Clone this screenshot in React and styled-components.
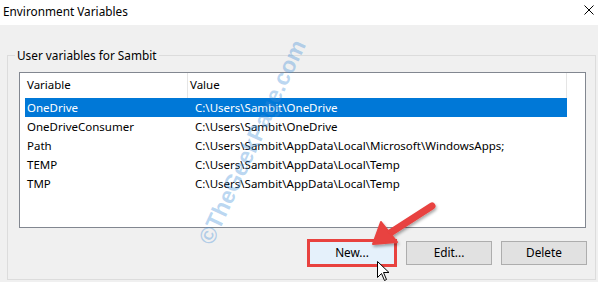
import * as React from "react";
import styled, {createGlobalStyle} from "styled-components";

const GlobalStyle = createGlobalStyle`
  html, body {
    margin: 0;
    padding: 0;
    background: #f0f0f0;
  }
  body {
    font-family: "Noto Sans", "Open Sans", sans-serif;
    font-size: 11.5px;
    color: #000;
  }
`;

const Window = styled.div`
  position: relative;
  width: 598px;
  height: 282px;
  overflow: hidden;
  display: flex;
  flex-direction: column;
  background: #f0f0f0;
`;

const TitleBar = styled.div`
  height: 25px;
  background: #fff;
  display: flex;
  align-items: center;
  justify-content: space-between;
  padding: 0 3px 4px 3px;
  box-sizing: border-box;
  flex-shrink: 0;
`;

const Title = styled.span`
  font-size: 11.8px;
  line-height: 16px;
`;

const CloseIcon = styled.svg`
  width: 10px;
  height: 10px;
  margin-right: 1px;
  margin-top: -2px;
`;

const GroupBox = styled.div`
  position: relative;
  margin: 30px 2px 2px 7px;
  border: 1px solid #dcdcdc;
  padding: 16px 9px 12px 11px;
  display: flex;
  flex-direction: column;
  gap: 13px;
  flex: 1;
`;

const Legend = styled.span`
  position: absolute;
  top: -9px;
  left: 7px;
  padding: 0 2px;
  background: #f0f0f0;
  line-height: 16px;
  font-size: 11.8px;
`;

const ListView = styled.div`
  height: 154px;
  background: #fff;
  border: 1px solid #828790;
  display: flex;
  flex-direction: column;
  position: relative;
`;

const HeaderRow = styled.div`
  display: flex;
  height: 25px;
  align-items: stretch;
  padding-left: 5px;
  width: 542px;
`;

const HeaderCell = styled.div`
  width: ${p => p.$w}px;
  flex-shrink: 0;
  padding-left: 2px;
  box-sizing: border-box;
  display: flex;
  align-items: center;
  border-right: ${p => (p.$sep ? "1px solid #e5e5e5" : "none")};
  flex-grow: ${p => (p.$grow ? 1 : 0)};
  padding-bottom: 2px;
`;

const Row = styled.div`
  display: flex;
  height: 19px;
  align-items: center;
  margin-left: 5px;
  width: 542px;
  background: ${p => (p.$selected ? "#0078d7" : "transparent")};
  color: ${p => (p.$selected ? "#fff" : "#000")};
`;

const Cell = styled.div`
  width: ${p => p.$w}px;
  flex-shrink: 0;
  padding-left: 2px;
  box-sizing: border-box;
  white-space: nowrap;
`;

const ButtonRow = styled.div`
  display: flex;
  justify-content: flex-end;
  gap: 9px;
  margin-right: -1px;
`;

const Button = styled.button`
  width: 86px;
  height: 24px;
  font-family: "Noto Sans", "Open Sans", sans-serif;
  font-size: 11.8px;
  color: #000;
  background: ${p => (p.$active ? "#e5f1fb" : "#e1e1e1")};
  border: 1px solid ${p => (p.$active ? "#0078d7" : "#adadad")};
  outline: ${p => (p.$marked ? "3px solid #e8423f" : "none")};
  outline-offset: -1px;
  padding: 0 0 2px 0;
  margin-right: ${p => (p.$marked ? "2px" : "0")};
`;

const Watermark = styled.div`
  position: absolute;
  left: 134px;
  top: 128px;
  width: 236px;
  text-align: center;
  font-family: "Liberation Sans", sans-serif;
  font-weight: bold;
  font-size: 23px;
  line-height: 28px;
  color: rgba(60, 140, 215, 0.36);
  transform: rotate(-65deg);
  white-space: nowrap;
  pointer-events: none;
`;

const Overlay = styled.svg`
  position: absolute;
  left: 0;
  top: 0;
  width: 598px;
  height: 282px;
  pointer-events: none;
`;

const rows = [
  ["OneDrive", "C:\\Users\\Sambit\\OneDrive"],
  ["OneDriveConsumer", "C:\\Users\\Sambit\\OneDrive"],
  ["Path", "C:\\Users\\Sambit\\AppData\\Local\\Microsoft\\WindowsApps;"],
  ["TEMP", "C:\\Users\\Sambit\\AppData\\Local\\Temp"],
  ["TMP", "C:\\Users\\Sambit\\AppData\\Local\\Temp"],
];

export default function App() {
  return (
    <Window>
      <GlobalStyle/>
      <TitleBar>
        <Title>Environment Variables</Title>
        <CloseIcon viewBox="0 0 10 10">
          <path d="M0.5 0.5 L9.5 9.5 M9.5 0.5 L0.5 9.5" stroke="#000" strokeWidth="1" fill="none"/>
        </CloseIcon>
      </TitleBar>

      <GroupBox>
        <Legend>User variables for Sambit</Legend>
        <ListView>
          <HeaderRow>
            <HeaderCell $w={163} $sep>Variable</HeaderCell>
            <HeaderCell $w={0} $grow $sep>Value</HeaderCell>
          </HeaderRow>
          {rows.map((r, i) => (
            <Row key={r[0]} $selected={i === 0}>
              <Cell $w={168}>{r[0]}</Cell>
              <Cell $w={374}>{r[1]}</Cell>
            </Row>
          ))}
        </ListView>
        <ButtonRow>
          <Button $active $marked>New...</Button>
          <Button>Edit...</Button>
          <Button>Delete</Button>
        </ButtonRow>
      </GroupBox>

      <Watermark>©TheGeekPage.com</Watermark>

      <Overlay viewBox="0 0 598 282">
        <defs>
          <filter id="sh" x="-20%" y="-20%" width="140%" height="140%">
            <feDropShadow dx="1" dy="2" stdDeviation="1.5" floodColor="#000" floodOpacity="0.35"/>
          </filter>
        </defs>
        <g filter="url(#sh)" fill="#e8423f" stroke="#e8423f">
          <line x1="432" y1="206" x2="390" y2="233" strokeWidth="7" strokeLinecap="round"/>
          <polygon points="373,244 381,222 397,242" strokeWidth="2" strokeLinejoin="round"/>
        </g>
        <path d="M377.5 261.5 L377.5 277.5 L381.5 273.5 L384.5 280.5 L386.5 279.5 L383.5 272.5 L389 272.5 Z"
              fill="#fff" stroke="#000" strokeWidth="1" strokeLinejoin="round"/>
      </Overlay>
    </Window>
  );
}
